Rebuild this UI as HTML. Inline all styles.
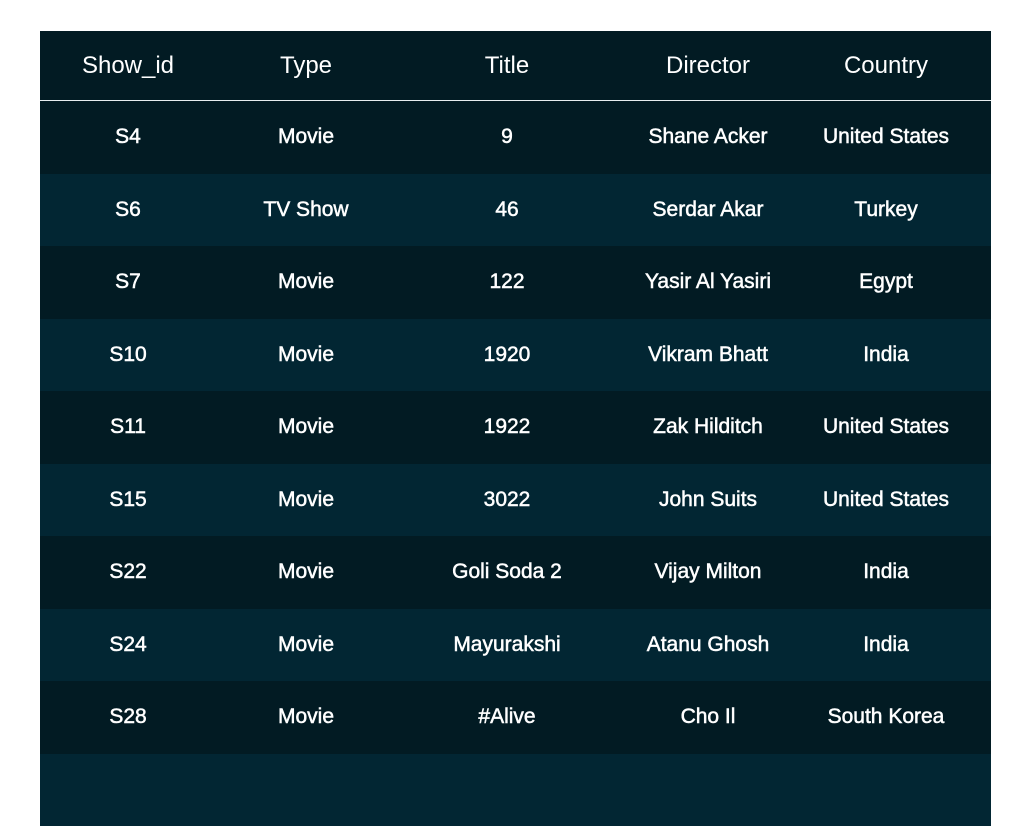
<!DOCTYPE html><html><head><style>
body{margin:0;background:#fff;width:1024px;height:768px;overflow:hidden;font-family:"Liberation Sans",sans-serif;color:#fff}
.t{position:absolute;left:40px;top:31px;width:951px}
.r{position:relative;height:72.5px;background:#021b23}
.r.a{background:#022633}
.h{height:69px;border-bottom:1px solid #e8eef0;background:#021b23}
.c{position:absolute;top:0;height:100%;display:flex;align-items:center;justify-content:center;width:220px;margin-left:-110px;font-size:21px;font-weight:normal;-webkit-text-stroke:0.5px #fff}
.h .c{font-size:24px;-webkit-text-stroke:0;padding-bottom:1px}
.c1{left:88px}.c2{left:266px}.c3{left:467px}.c4{left:668px}.c5{left:846px}
</style></head><body><div class="t">
<div class="r h"><div class="c c1">Show_id</div><div class="c c2">Type</div><div class="c c3">Title</div><div class="c c4">Director</div><div class="c c5">Country</div></div>
<div class="r"><div class="c c1">S4</div><div class="c c2">Movie</div><div class="c c3">9</div><div class="c c4">Shane Acker</div><div class="c c5">United States</div></div>
<div class="r a"><div class="c c1">S6</div><div class="c c2">TV Show</div><div class="c c3">46</div><div class="c c4">Serdar Akar</div><div class="c c5">Turkey</div></div>
<div class="r"><div class="c c1">S7</div><div class="c c2">Movie</div><div class="c c3">122</div><div class="c c4">Yasir Al Yasiri</div><div class="c c5">Egypt</div></div>
<div class="r a"><div class="c c1">S10</div><div class="c c2">Movie</div><div class="c c3">1920</div><div class="c c4">Vikram Bhatt</div><div class="c c5">India</div></div>
<div class="r"><div class="c c1">S11</div><div class="c c2">Movie</div><div class="c c3">1922</div><div class="c c4">Zak Hilditch</div><div class="c c5">United States</div></div>
<div class="r a"><div class="c c1">S15</div><div class="c c2">Movie</div><div class="c c3">3022</div><div class="c c4">John Suits</div><div class="c c5">United States</div></div>
<div class="r"><div class="c c1">S22</div><div class="c c2">Movie</div><div class="c c3">Goli Soda 2</div><div class="c c4">Vijay Milton</div><div class="c c5">India</div></div>
<div class="r a"><div class="c c1">S24</div><div class="c c2">Movie</div><div class="c c3">Mayurakshi</div><div class="c c4">Atanu Ghosh</div><div class="c c5">India</div></div>
<div class="r"><div class="c c1">S28</div><div class="c c2">Movie</div><div class="c c3">#Alive</div><div class="c c4">Cho Il</div><div class="c c5">South Korea</div></div>
<div class="r a"></div>
</div></body></html>
